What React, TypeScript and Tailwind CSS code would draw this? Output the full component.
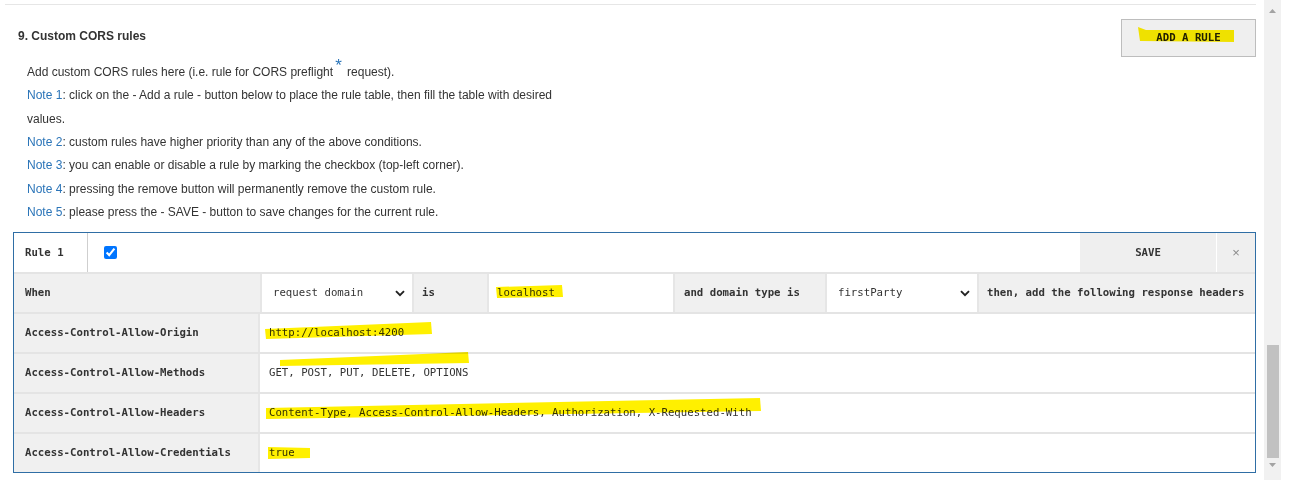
import React from "react";

const mono = { fontFamily: '"DejaVu Sans Mono", "Liberation Mono", monospace' };

function Chevron() {
  return (
    <svg width="10" height="7" viewBox="0 0 10 7" className="shrink-0">
      <path d="M1 1.2 L5 5.2 L9 1.2" fill="none" stroke="#222" strokeWidth="1.9" />
    </svg>
  );
}

function Note({ n, children }: { n: number; children: React.ReactNode }) {
  return (
    <div>
      <span className="text-[#2a74b8]">Note {n}</span>: {children}
    </div>
  );
}

function HeaderRow({ label, value }: { label: string; value: string }) {
  return (
    <div className="flex h-[40px] border-t-2 border-[#e4e4e4]">
      <div className="w-[246px] shrink-0 bg-[#f0f0f0] border-r-2 border-[#e6e6e6] flex items-center pl-[11px] font-bold text-[#333]">
        {label}
      </div>
      <div className="flex-1 bg-white flex items-center pl-[9px] text-[#333]">{value}</div>
    </div>
  );
}

export default function App() {
  return (
    <div
      className="relative w-[1300px] h-[480px] bg-white flex overflow-hidden"
      style={{ fontFamily: '"Liberation Sans", Arial, sans-serif' }}
    >
      <div className="w-[1264px] shrink-0">
        <div className="mt-[4px] ml-[5px] w-[1251px] h-px bg-[#e6e6e6]" />
        <div className="mt-[14px] flex items-start pl-[18px] pr-[8px]">
          <div className="mt-[10px] text-[12px] leading-[14px] font-bold text-[#333]">9. Custom CORS rules</div>
          <div
            className="ml-auto w-[135px] h-[38px] border border-[#bdbdbd] bg-[#efefef] flex items-center justify-center text-[10.7px] font-bold text-[#222]"
            style={mono}
          >
            ADD A RULE
          </div>
        </div>
        <div className="mt-[4px] pl-[27px] w-[580px] text-[12px] leading-[23.33px] text-[#333]">
          <div>
            Add custom CORS rules here (i.e. rule for CORS preflight
            <span className="relative top-[-5px] text-[17px] leading-[0] text-[#2a74b8] px-[2px]">*</span> request).
          </div>
          <div className="w-[535px]">
            <Note n={1}>
              click on the - Add a rule - button below to place the rule table, then fill the table with desired values.
            </Note>
          </div>
          <Note n={2}>custom rules have higher priority than any of the above conditions.</Note>
          <Note n={3}>you can enable or disable a rule by marking the checkbox (top-left corner).</Note>
          <Note n={4}>pressing the remove button will permanently remove the custom rule.</Note>
          <Note n={5}>please press the - SAVE - button to save changes for the current rule.</Note>
        </div>

        <div
          className="mt-[8px] ml-[13px] w-[1243px] border border-[#2f6ea5] text-[10.7px] text-[#333]"
          style={mono}
        >
          <div className="flex h-[39px]">
            <div className="w-[74px] shrink-0 border-r border-[#cfcfcf] flex items-center pl-[11px] font-bold">
              Rule 1
            </div>
            <div className="flex-1 flex items-center pl-[16px]">
              <input type="checkbox" defaultChecked readOnly className="w-[13px] h-[13px] m-0 accent-[#0075ff]" />
            </div>
            <div className="w-[136px] shrink-0 bg-[#efefef] flex items-center justify-center font-bold">SAVE</div>
            <div
              className="w-[39px] shrink-0 bg-[#efefef] border-l border-white flex items-center justify-center text-[13px] text-[#8a8a8a]"
              style={{ fontFamily: '"Liberation Sans", Arial, sans-serif' }}
            >
              ×
            </div>
          </div>
          <div className="flex h-[40px] border-t-2 border-[#e4e4e4]">
            <div className="w-[246px] shrink-0 bg-[#f0f0f0] flex items-center pl-[11px] font-bold">When</div>
            <div className="w-[152px] shrink-0 bg-white border-l-2 border-[#e6e6e6] flex items-center pl-[11px] pr-[7px] justify-between">
              <span>request domain</span>
              <Chevron />
            </div>
            <div className="w-[75px] shrink-0 bg-[#f0f0f0] border-l-2 border-[#e6e6e6] flex items-center pl-[8px] font-bold">is</div>
            <div className="w-[186px] shrink-0 bg-white border-l-2 border-[#e6e6e6] flex items-center pl-[8px]">localhost</div>
            <div className="w-[152px] shrink-0 bg-[#f0f0f0] border-l-2 border-[#e6e6e6] flex items-center pl-[9px] font-bold">
              and domain type is
            </div>
            <div className="w-[152px] shrink-0 bg-white border-l-2 border-[#e6e6e6] flex items-center pl-[11px] pr-[7px] justify-between">
              <span>firstParty</span>
              <Chevron />
            </div>
            <div className="flex-1 bg-[#f0f0f0] border-l-2 border-[#e6e6e6] flex items-center pl-[8px] font-bold whitespace-nowrap">
              then, add the following response headers
            </div>
          </div>
          <HeaderRow label="Access-Control-Allow-Origin" value="http://localhost:4200" />
          <HeaderRow label="Access-Control-Allow-Methods" value="GET, POST, PUT, DELETE, OPTIONS" />
          <HeaderRow
            label="Access-Control-Allow-Headers"
            value="Content-Type, Access-Control-Allow-Headers, Authorization, X-Requested-With"
          />
          <HeaderRow label="Access-Control-Allow-Credentials" value="true" />
        </div>
      </div>

      <div className="w-[17px] shrink-0 bg-[#f1f1f1] relative">
        <svg width="17" height="480" viewBox="0 0 17 480" className="block">
          <path d="M5 13 L8.5 9 L12 13 Z" fill="#a3a3a3" />
          <rect x="3" y="345" width="12" height="113" fill="#c1c1c1" />
          <path d="M5 463 L12 463 L8.5 467 Z" fill="#a3a3a3" />
        </svg>
      </div>
      <div className="flex-1 bg-white" />

      <svg
        className="absolute left-0 top-0 pointer-events-none mix-blend-multiply"
        width="1300"
        height="480"
        viewBox="0 0 1300 480"
      >
        <g fill="#fff000">
          <polygon points="1138,27 1146,30 1234,30 1234,42 1140,41" />
          <polygon points="496,287 562,285 563,297 497,298" />
          <polygon points="265,329 431,322 432,334 266,339" />
          <polygon points="280,360 400,355 468,352 469,363 280,366" />
          <polygon points="266,408 760,398 761,411 266,419" />
          <polygon points="268,447 310,448 310,458 268,459" />
        </g>
      </svg>
    </div>
  );
}
